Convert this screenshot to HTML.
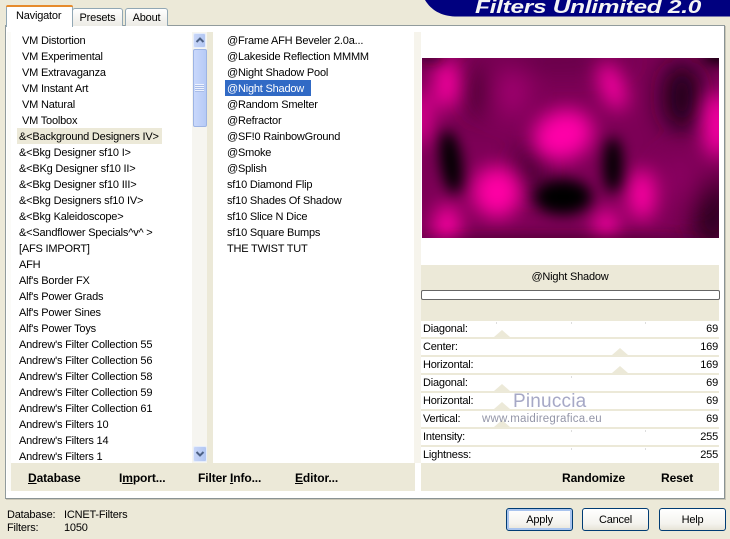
<!DOCTYPE html>
<html><head><meta charset="utf-8"><style>
html,body{margin:0;padding:0}
body{width:730px;height:539px;overflow:hidden;background:#ece9d8;position:relative;font-family:"Liberation Sans",sans-serif;font-size:11px;letter-spacing:-.2px;color:#000}
.a{position:absolute}
.t{position:absolute;white-space:nowrap;line-height:16px;height:16px;margin-top:1px}
.b{font-weight:bold;font-size:12px;margin-top:0;letter-spacing:-.1px}
.r{position:absolute;left:421px;width:298px;height:16px;background:#fff}
.btn{position:absolute;top:508px;width:65px;height:21px;border:1px solid #003c74;border-radius:3px;background:linear-gradient(#fff,#f4f3ee 70%,#e6e3d6);text-align:center;line-height:22px}
.tab{position:absolute;border:1px solid #91a7b4;border-bottom:none;border-radius:3px 3px 0 0;background:linear-gradient(#fff,#ecebe5);text-align:center}
.tri{position:absolute;width:0;height:0;border-left:8px solid transparent;border-right:8px solid transparent;border-bottom:7px solid #ece9d8}
.tk{position:absolute;width:1px;height:2px;background:#ddd}
</style></head><body>
<svg class="a" style="left:425px;top:0" width="305" height="18"><path d="M0 0C6 10 16 16 30 16.500L305 16.500V0Z" fill="#00007f"/><text x="50" y="13" font-family="Liberation Sans" font-size="18.500" font-weight="bold" font-style="italic" fill="#f4f4f4" textLength="226" lengthAdjust="spacingAndGlyphs">Filters Unlimited 2.0</text></svg>

<div class="a" style="left:5px;top:25px;width:718px;height:472px;background:#fff;border:1px solid #919b9c;border-right-color:#8a9394;border-bottom-color:#8a9394;box-shadow:1px 1px 0 #c9c6b6"></div>
<div class="tab" style="left:72px;top:8px;width:49px;height:17px;line-height:19px">Presets</div>
<div class="tab" style="left:125px;top:8px;width:41px;height:17px;line-height:19px">About</div>
<div class="a" style="left:6px;top:5px;width:65px;height:21px;background:#fff;border:1px solid #91a7b4;border-bottom:none;border-radius:3px 3px 0 0"></div>
<div class="a" style="left:6px;top:5px;width:67px;height:2px;background:#e68b2c;border-radius:3px 3px 0 0"></div>
<div class="t" style="left:16px;top:7px">Navigator</div>

<div class="a" style="left:7px;top:32px;width:4px;height:459px;background:#fbfbf8"></div>
<div class="a" style="left:207px;top:32px;width:6px;height:431px;background:#ece9d8"></div>
<div class="a" style="left:414px;top:32px;width:7px;height:431px;background:#f6f4ec"></div>
<div class="a" style="left:11px;top:463px;width:404px;height:28px;background:#ece9d8"></div>
<div class="a" style="left:421px;top:463px;width:298px;height:28px;background:#ece9d8"></div>

<div class="a" style="left:192px;top:32px;width:15px;height:431px;background:#f6f5f0"></div>
<div class="a" style="left:193px;top:33px;width:13px;height:15px;background:linear-gradient(90deg,#c8d6f8,#b2c6f2);border:1px solid #e6edfb;border-radius:2px;box-sizing:border-box"></div>
<svg class="a" style="left:193px;top:33px" width="14" height="15"><path d="M3.500 9L7 5.500L10.500 9" fill="none" stroke="#4d6185" stroke-width="2"/></svg>
<div class="a" style="left:193px;top:49px;width:14px;height:78px;background:linear-gradient(90deg,#c9d8fb,#b6caf6);border:1px solid #9db4e4;border-radius:2px;box-sizing:border-box"></div>
<div class="a" style="left:195px;top:84px;width:9px;height:8px;background:repeating-linear-gradient(#eef3fe 0 1px,#a9bde8 1px 2px)"></div>
<div class="a" style="left:193px;top:446px;width:14px;height:16px;background:linear-gradient(90deg,#c8d6f8,#b2c6f2);border:1px solid #e6edfb;border-radius:2px;box-sizing:border-box"></div>
<svg class="a" style="left:193px;top:446px" width="14" height="16"><path d="M3.500 6L7 9.500L10.500 6" fill="none" stroke="#4d6185" stroke-width="2"/></svg>

<div class="a" style="left:17px;top:128px;width:145px;height:16px;background:#ece9d8"></div>
<div class="t" style="left:22px;top:32px">VM Distortion</div>
<div class="t" style="left:22px;top:48px">VM Experimental</div>
<div class="t" style="left:22px;top:64px">VM Extravaganza</div>
<div class="t" style="left:22px;top:80px">VM Instant Art</div>
<div class="t" style="left:22px;top:96px">VM Natural</div>
<div class="t" style="left:22px;top:112px">VM Toolbox</div>
<div class="t" style="left:19px;top:128px">&amp;&lt;Background Designers IV&gt;</div>
<div class="t" style="left:19px;top:144px">&amp;&lt;Bkg Designer sf10 I&gt;</div>
<div class="t" style="left:19px;top:160px">&amp;&lt;BKg Designer sf10 II&gt;</div>
<div class="t" style="left:19px;top:176px">&amp;&lt;Bkg Designer sf10 III&gt;</div>
<div class="t" style="left:19px;top:192px">&amp;&lt;Bkg Designers sf10 IV&gt;</div>
<div class="t" style="left:19px;top:208px">&amp;&lt;Bkg Kaleidoscope&gt;</div>
<div class="t" style="left:19px;top:224px">&amp;&lt;Sandflower Specials^v^ &gt;</div>
<div class="t" style="left:19px;top:240px">[AFS IMPORT]</div>
<div class="t" style="left:19px;top:256px">AFH</div>
<div class="t" style="left:19px;top:272px">Alf's Border FX</div>
<div class="t" style="left:19px;top:288px">Alf's Power Grads</div>
<div class="t" style="left:19px;top:304px">Alf's Power Sines</div>
<div class="t" style="left:19px;top:320px">Alf's Power Toys</div>
<div class="t" style="left:19px;top:336px">Andrew's Filter Collection 55</div>
<div class="t" style="left:19px;top:352px">Andrew's Filter Collection 56</div>
<div class="t" style="left:19px;top:368px">Andrew's Filter Collection 58</div>
<div class="t" style="left:19px;top:384px">Andrew's Filter Collection 59</div>
<div class="t" style="left:19px;top:400px">Andrew's Filter Collection 61</div>
<div class="t" style="left:19px;top:416px">Andrew's Filters 10</div>
<div class="t" style="left:19px;top:432px">Andrew's Filters 14</div>
<div class="t" style="left:19px;top:448px">Andrew's Filters 1</div>

<div class="a" style="left:225px;top:80px;width:86px;height:16px;background:#316ac5"></div>
<div class="t" style="left:227px;top:32px">@Frame AFH Beveler 2.0a...</div>
<div class="t" style="left:227px;top:48px">@Lakeside Reflection MMMM</div>
<div class="t" style="left:227px;top:64px">@Night Shadow Pool</div>
<div class="t" style="left:227px;top:80px;color:#fff">@Night Shadow</div>
<div class="t" style="left:227px;top:96px">@Random Smelter</div>
<div class="t" style="left:227px;top:112px">@Refractor</div>
<div class="t" style="left:227px;top:128px">@SF!0 RainbowGround</div>
<div class="t" style="left:227px;top:144px">@Smoke</div>
<div class="t" style="left:227px;top:160px">@Splish</div>
<div class="t" style="left:227px;top:176px">sf10 Diamond Flip</div>
<div class="t" style="left:227px;top:192px">sf10 Shades Of Shadow</div>
<div class="t" style="left:227px;top:208px">sf10 Slice N Dice</div>
<div class="t" style="left:227px;top:224px">sf10 Square Bumps</div>
<div class="t" style="left:227px;top:240px">THE TWIST TUT</div>

<svg class="a" style="left:422px;top:58px" width="297" height="180" viewBox="422 58 297 180">
<defs>
<filter id="f1" filterUnits="userSpaceOnUse" x="372" y="8" width="397" height="280"><feGaussianBlur stdDeviation="10"/></filter>
<filter id="f2" filterUnits="userSpaceOnUse" x="372" y="8" width="397" height="280"><feGaussianBlur stdDeviation="7"/></filter>
<filter id="f3" filterUnits="userSpaceOnUse" x="372" y="8" width="397" height="280"><feGaussianBlur stdDeviation="13"/></filter>
</defs>
<rect x="422" y="58" width="297" height="180" fill="#7c0056"/>
<g filter="url(#f3)">
<ellipse cx="478" cy="92" rx="10" ry="26" fill="#3a0028"/>
<ellipse cx="682" cy="97" rx="20" ry="36" fill="#1c0014"/>
<ellipse cx="512" cy="92" rx="14" ry="24" fill="#a80074"/>
<ellipse cx="530" cy="170" rx="14" ry="26" fill="#40002e"/>
<ellipse cx="560" cy="60" rx="70" ry="10" fill="#600044"/>
<ellipse cx="712" cy="215" rx="20" ry="38" fill="#2a001e"/>
<ellipse cx="680" cy="180" rx="22" ry="22" fill="#8a0060"/>
</g>
<g filter="url(#f1)">
<ellipse cx="447" cy="84" rx="12" ry="26" fill="#ff00a4"/>
<ellipse cx="422" cy="118" rx="8" ry="28" fill="#ff00a4"/>
<ellipse cx="612" cy="86" rx="11" ry="26" fill="#ff00a6" transform="rotate(-20 612 86)"/>
<ellipse cx="717" cy="124" rx="14" ry="34" fill="#ff00a8"/>
<ellipse cx="563" cy="135" rx="31" ry="25" fill="#ff00a8" transform="rotate(-20 563 135)"/>
<ellipse cx="497" cy="192" rx="25" ry="26" fill="#ff00a4"/>
<ellipse cx="642" cy="195" rx="14" ry="26" fill="#ff00a4"/>
<ellipse cx="447" cy="226" rx="13" ry="22" fill="#ff00a4"/>
<ellipse cx="606" cy="225" rx="12" ry="16" fill="#ff00a6"/>
</g>
<g filter="url(#f2)">
<ellipse cx="451" cy="162" rx="11" ry="32" fill="#000" transform="rotate(-8 451 162)"/>
<ellipse cx="563" cy="197" rx="29" ry="18" fill="#000"/>
<ellipse cx="613" cy="165" rx="10" ry="28" fill="#000"/>
<ellipse cx="718" cy="56" rx="16" ry="8" fill="#000"/>
<ellipse cx="430" cy="55" rx="14" ry="5" fill="#200018"/>
<ellipse cx="560" cy="242" rx="150" ry="4" fill="#300020"/>
</g>
</svg>

<div class="a" style="left:421px;top:265px;width:298px;height:56px;background:#ece9d8"></div>
<div class="t" style="left:421px;top:268px;width:298px;text-align:center">@Night Shadow</div>
<div class="a" style="left:421px;top:290px;width:297px;height:8px;background:#fff;border:1px solid #666;border-radius:2px;box-sizing:content-box"></div>

<div class="a" style="left:421px;top:321px;width:298px;height:142px;background:#ece9d8"></div>
<div class="r" style="top:321px"></div>
<div class="r" style="top:339px"></div>
<div class="r" style="top:357px"></div>
<div class="r" style="top:375px"></div>
<div class="r" style="top:393px"></div>
<div class="r" style="top:411px"></div>
<div class="r" style="top:429px"></div>
<div class="r" style="top:447px"></div>
<div class="tri" style="left:494px;top:330px"></div>
<div class="tri" style="left:612px;top:348px"></div>
<div class="tri" style="left:612px;top:366px"></div>
<div class="tri" style="left:494px;top:384px"></div>
<div class="tri" style="left:494px;top:402px"></div>
<div class="tri" style="left:494px;top:420px"></div>
<div class="tk" style="left:571px;top:322px"></div><div class="tk" style="left:571px;top:376px"></div><div class="tk" style="left:571px;top:430px"></div><div class="tk" style="left:571px;top:448px"></div>
<div class="tk" style="left:496px;top:322px"></div><div class="tk" style="left:645px;top:322px"></div><div class="tk" style="left:645px;top:430px"></div><div class="tk" style="left:645px;top:448px"></div>

<div class="t" style="left:423px;top:320px">Diagonal:</div>
<div class="t" style="left:423px;top:338px">Center:</div>
<div class="t" style="left:423px;top:356px">Horizontal:</div>
<div class="t" style="left:423px;top:374px">Diagonal:</div>
<div class="t" style="left:423px;top:392px">Horizontal:</div>
<div class="t" style="left:423px;top:410px">Vertical:</div>
<div class="t" style="left:423px;top:428px">Intensity:</div>
<div class="t" style="left:423px;top:446px">Lightness:</div>
<div class="t" style="right:12px;top:320px">69</div>
<div class="t" style="right:12px;top:338px">169</div>
<div class="t" style="right:12px;top:356px">169</div>
<div class="t" style="right:12px;top:374px">69</div>
<div class="t" style="right:12px;top:392px">69</div>
<div class="t" style="right:12px;top:410px">69</div>
<div class="t" style="right:12px;top:428px">255</div>
<div class="t" style="right:12px;top:446px">255</div>

<div class="t" style="left:513px;top:391px;font-size:19px;line-height:20px;height:20px;color:#a6a8c6;letter-spacing:.2px">Pinuccia</div>
<div class="t" style="left:482px;top:410px;font-size:11.500px;color:#9496a8;letter-spacing:.2px">www.maidiregrafica.eu</div>

<div class="t b" style="left:28px;top:470px"><u>D</u>atabase</div>
<div class="t b" style="left:119px;top:470px">I<u>m</u>port...</div>
<div class="t b" style="left:198px;top:470px">Filter <u>I</u>nfo...</div>
<div class="t b" style="left:295px;top:470px"><u>E</u>ditor...</div>
<div class="t b" style="left:562px;top:470px">Randomize</div>
<div class="t b" style="left:661px;top:470px">Reset</div>

<div class="t" style="left:7px;top:506px">Database:</div>
<div class="t" style="left:64px;top:506px">ICNET-Filters</div>
<div class="t" style="left:7px;top:519px">Filters:</div>
<div class="t" style="left:64px;top:519px">1050</div>

<div class="btn" style="left:506px;box-shadow:inset 0 0 0 2px #a9c4ee">Apply</div>
<div class="btn" style="left:582px">Cancel</div>
<div class="btn" style="left:659px">Help</div>
</body></html>
